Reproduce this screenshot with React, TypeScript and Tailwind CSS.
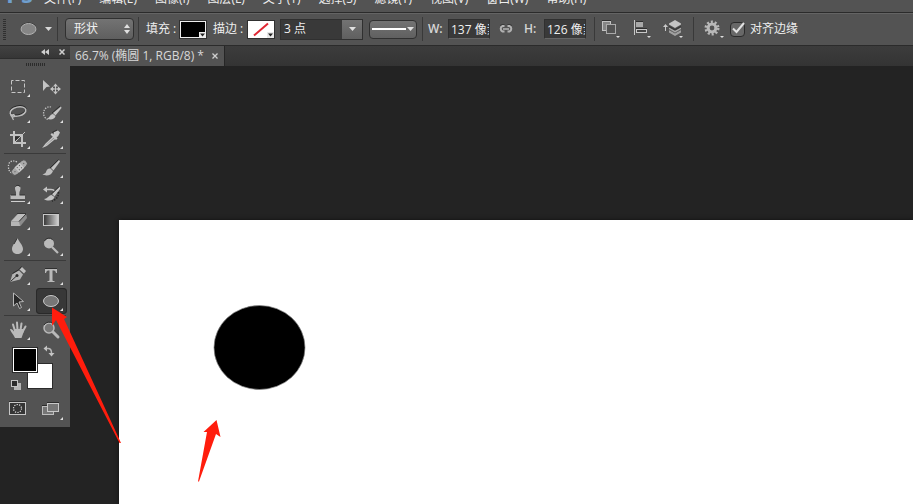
import React, { useState } from 'react';
import clsx from 'clsx';

const menus = ['文件(F)', '编辑(E)', '图像(I)', '图层(L)', '文字(Y)', '选择(S)', '滤镜(T)', '视图(V)', '窗口(W)', '帮助(H)'];

interface Tool {
  id: string;
  label: string;
  icon: React.ReactNode;
  noFlyout?: boolean;
}

const BrushShape = () => (
  <>
    <path d="M23 5 L15 13 L17.5 15.5 L24 6.5 Z" fill="#c4c4c4" />
    <path d="M14.5 13.5 C12 13 10.5 15 10 17 C9.5 18.5 8 19 6.5 19 C9 21.5 15.5 21 17 16 Z" fill="#bdbdbd" />
    <path d="M14 13 L22.5 4.5" stroke="#2e2e2e" />
  </>
);

// every icon is drawn in a 31x26 cell
const toolGroups: Tool[][] = [
  [
    {
      id: 'marquee',
      label: '矩形选框工具',
      icon: <rect x="8.5" y="6.5" width="13" height="12" fill="none" stroke="#c6c6c6" strokeDasharray="4 2" strokeDashoffset="2" />,
    },
    {
      id: 'move',
      label: '移动工具',
      noFlyout: true,
      icon: (
        <>
          <path d="M7 6 L14 12.5 L10.5 13 L7 17 Z" fill="#c4c4c4" />
          <path d="M19.5 10.5 V19.5 M15 15 H24" stroke="#c4c4c4" />
          <path d="M19.5 9.5 L22 12.5 H17 Z M19.5 20.5 L22 17.5 H17 Z M14 15 L17 12.5 V17.5 Z M25 15 L22 12.5 V17.5 Z" fill="#c4c4c4" />
          <path d="M18 13.5 h3 v3 h-3 Z" fill="#535353" />
          <path d="M19.5 12 V18 M16.5 15 H22.5" stroke="#c4c4c4" />
        </>
      ),
    },
    {
      id: 'lasso',
      label: '套索工具',
      icon: (
        <>
          <ellipse cx="15" cy="10.5" rx="8" ry="4.5" transform="rotate(-13 15 10.5)" fill="none" stroke="#292929" strokeWidth="1.5" />
          <ellipse cx="15" cy="11.5" rx="8" ry="4.5" transform="rotate(-13 15 11.5)" fill="none" stroke="#bebebe" strokeWidth="1.5" />
          <path d="M8 14 C7 17 12 18 11.5 15.5 C11 13.5 7.5 15 9 17 L10.5 20" fill="none" stroke="#bebebe" strokeWidth="1.2" />
        </>
      ),
    },
    {
      id: 'quick-select',
      label: '快速选择工具',
      icon: (
        <>
          <path d="M15 7 A5.5 6 0 1 0 12 19.5" fill="none" stroke="#c4c4c4" strokeWidth="1.3" strokeDasharray="1.3 1.2" />
          <path d="M25 6.5 L17 13 L19.5 15.5 L25.5 8 Z" fill="#c4c4c4" />
          <path d="M17 14 C14 14 14 18 11 18.5 C14 20.5 19 19.5 19.5 16 Z" fill="#c4c4c4" />
          <path d="M16 13 L24 6" stroke="#2e2e2e" />
        </>
      ),
    },
    {
      id: 'crop',
      label: '裁剪工具',
      icon: (
        <>
          <path d="M11 5 V17 H23 M7 9 H19 V21" fill="none" stroke="#c2c2c2" strokeWidth="2" />
          <path d="M12 16 L22 6" stroke="#c2c2c2" />
          <path d="M12 15 V10.5 H17 Z" fill="#2e2e2e" />
        </>
      ),
    },
    {
      id: 'eyedropper',
      label: '吸管工具',
      icon: (
        <>
          <path d="M18 10.5 L10 18 L8 20.5 L10.5 19.5 L19.5 12" fill="#858585" stroke="#c6c6c6" strokeWidth="1.2" />
          <path d="M18 6 L22 4.5 L24 6.5 L22 10.5 L20.5 11 L21.5 12.5 L20 14 L14.5 8.5 L16 7 L17.5 8.5 Z" fill="#c4c4c4" />
          <path d="M16 6.5 L21 4" stroke="#303030" />
        </>
      ),
    },
  ],
  [
    {
      id: 'healing',
      label: '污点修复画笔工具',
      icon: (
        <>
          <path d="M14 7 C8 4 5 8 5.5 12 C5.5 15 6.5 17 9 18" fill="none" stroke="#cdcdcd" strokeWidth="1.3" strokeDasharray="1.3 1.3" />
          <g transform="rotate(-43 16 13)">
            <rect x="7" y="9.5" width="19" height="7" rx="3.5" fill="#a9a9a9" stroke="#3a3a3a" strokeWidth="0.6" />
            <rect x="13" y="9.5" width="7" height="7" fill="#c8c8c8" />
            <path d="M14.5 11.5h1 M17.5 11.5h1 M14.5 14.5h1 M17.5 14.5h1 M10 13h1 M22 13h1" stroke="#555" />
          </g>
        </>
      ),
    },
    { id: 'brush', label: '画笔工具', icon: <BrushShape /> },
    {
      id: 'stamp',
      label: '仿制图章工具',
      icon: (
        <>
          <path d="M12 7 C12 4 17.5 4 17.5 7 C17.5 10 16 10 16.5 14 H22 V18 H7.5 V14 H13 C13.5 10 12 10 12 7 Z" fill="#bcbcbc" />
          <path d="M12.5 5.5 C13.5 4 16 4 17 5.5 M8 14 H13 M16.5 14 H22" stroke="#303030" fill="none" />
          <path d="M8 20.5 H22" stroke="#d0d0d0" />
        </>
      ),
    },
    {
      id: 'history-brush',
      label: '历史记录画笔工具',
      icon: (
        <>
          <path d="M24 5.5 L16 13 L18.5 15.5 L24 8 Z" fill="#c4c4c4" />
          <path d="M15.5 14 C13 14 12 17.5 8 18 C11 20.5 17.5 20 18.5 16 Z" fill="#c4c4c4" />
          <path d="M10 8.5 H15 C17 8.5 18 9 18.5 10" fill="none" stroke="#c4c4c4" strokeWidth="1.5" />
          <path d="M7 8.5 L11 5.5 V11.5 Z" fill="#c4c4c4" />
          <path d="M15.5 13 L23 5.5" stroke="#2e2e2e" />
          <path d="M22.5 11 C22.5 16 20.5 18.5 16 20" fill="none" stroke="#262626" strokeWidth="1.5" strokeDasharray="1.5 1.3" />
        </>
      ),
    },
    {
      id: 'eraser',
      label: '橡皮擦工具',
      icon: (
        <>
          <path d="M8 14 L15 6.5 H23 L24 11 L17.5 19 H8 Z" fill="#8c8c8c" />
          <path d="M8.5 14 L15 7 H23 L16 14 Z" fill="#bebebe" />
          <path d="M8 14.5 H16 L17 19 H8 Z" fill="#b5b5b5" />
          <path d="M14 6.5 H23 M16 14.5 L23 7" stroke="#383838" />
        </>
      ),
    },
    {
      id: 'gradient',
      label: '渐变工具',
      icon: (
        <>
          <defs>
            <linearGradient id="ramp">
              <stop offset="0" stopColor="#343434" />
              <stop offset="1" stopColor="#d4d4d4" />
            </linearGradient>
          </defs>
          <rect x="7.5" y="7.5" width="15" height="11" fill="url(#ramp)" stroke="#c8c8c8" />
          <path d="M7 6.5 H23" stroke="#303030" />
        </>
      ),
    },
    {
      id: 'blur',
      label: '模糊工具',
      icon: (
        <>
          <path d="M14.5 5 C13 9 9 12 9 16 C9 19 11.5 21 14.5 21 C17.5 21 20 19 20 16 C20 12 16 9 14.5 5 Z" fill="#bbbbbb" />
          <path d="M14 5.5 L11 11" stroke="#383838" />
        </>
      ),
    },
    {
      id: 'dodge',
      label: '减淡工具',
      icon: (
        <>
          <circle cx="13" cy="10.5" r="5" fill="#bababa" />
          <path d="M8.5 8 A5 5 0 0 1 16.5 6.5" fill="none" stroke="#303030" />
          <path d="M16 14 L22 20" stroke="#bababa" strokeWidth="2.2" />
        </>
      ),
    },
  ],
  [
    {
      id: 'pen',
      label: '钢笔工具',
      icon: (
        <>
          <path d="M7 20 L9.5 12 L16 8.5 L20 12.5 L17 17.5 Z" fill="#b4b4b4" />
          <path d="M16.5 7.5 L19 5 L23 9 L21 11.5 Z" fill="#c0c0c0" />
          <path d="M7.5 19.5 L13.5 14 M9.5 11.5 L16 7.5 L18.5 4.5" fill="none" stroke="#2d2d2d" />
          <circle cx="14" cy="13.5" r="1.5" fill="#2d2d2d" />
        </>
      ),
    },
    {
      id: 'type',
      label: '横排文字工具',
      icon: (
        <>
          <path d="M9 6.5 H21" stroke="#303030" />
          <path d="M9 7 H21 V11 H20 C19.5 9 19 8.5 16.5 8.5 V18 C16.5 19 17 19 18.5 19 V20 H11.5 V19 C13 19 13.5 19 13.5 18 V8.5 C11 8.5 10.5 9 10 11 H9 Z" fill="#b9b9b9" />
        </>
      ),
    },
    {
      id: 'path-select',
      label: '路径选择工具',
      icon: <path d="M10.5 5 V18 L14 15 L16.5 20.5 L18.5 19.5 L16 14 L20.5 13.5 Z" fill="#292929" stroke="#b8b8b8" />,
    },
    {
      id: 'ellipse',
      label: '椭圆工具',
      icon: (
        <>
          <ellipse cx="15" cy="12.5" rx="8" ry="6" fill="#222" />
          <ellipse cx="15" cy="13" rx="7.5" ry="5.5" fill="#777" stroke="#c8c8c8" />
        </>
      ),
    },
  ],
  [
    {
      id: 'hand',
      label: '抓手工具',
      icon: (
        <>
          <path d="M12 14 L10 7.5 M14.5 13 L14 5.5 M17.5 13 L18.5 6.5 M19.5 15 L22.5 9.5" stroke="#bababa" strokeWidth="2" strokeLinecap="round" />
          <path d="M7 12.5 C8 11.5 9.5 12.5 11 14.5 V12 H20 L21 14 L18.5 21 H12 C11 18 8.5 16 7 12.5 Z" fill="#bababa" />
        </>
      ),
    },
    {
      id: 'zoom',
      label: '缩放工具',
      noFlyout: true,
      icon: (
        <>
          <path d="M17 15 L22 20" stroke="#b9b9b9" strokeWidth="3" strokeLinecap="round" />
          <circle cx="13" cy="11" r="5" fill="#777" stroke="#b9b9b9" strokeWidth="1.5" />
          <path d="M8 8 A6 6 0 0 1 17 6.5" fill="none" stroke="#303030" />
        </>
      ),
    },
  ],
];

const Divider = () => <span className="h-6 w-px shrink-0 bg-[#393939]" />;

const Down = ({ className }: { className?: string }) => (
  <svg width="7" height="4" viewBox="0 0 7 4" className={clsx('shrink-0', className)}>
    <path d="M0 0 H7 L3.5 4 Z" fill="currentColor" />
  </svg>
);

interface SizeInputProps {
  id: string;
  label: string;
  value: string;
}

const SizeInput: React.FC<SizeInputProps> = ({ id, label, value }) => (
  <>
    <label htmlFor={id} className="w-5 shrink-0 font-semibold text-[#d6d6d6]">
      {label}:
    </label>
    <input
      id={id}
      defaultValue={value}
      className="h-5 w-[42px] shrink-0 border border-[#303030] border-b-[#666] bg-[#393939] pl-0.5 text-[#f0f0f0] outline-none"
    />
  </>
);

const OptionsBar = () => {
  const [align, setAlign] = useState(true);

  return (
    <div className="flex h-[34px] shrink-0 items-center overflow-hidden border-y border-[#2b2b2b] bg-[#535353] pl-[3px] shadow-[inset_0_1px_0_#646464]">
      <svg width="3" height="21" className="shrink-0">
        <path d="M1.5 0 V21" stroke="#303030" strokeWidth="3" strokeDasharray="1 1" />
      </svg>
      <button aria-label="椭圆工具" className="mr-[5px] ml-3.5 flex w-8 shrink-0 items-center justify-between text-[#d8d8d8]">
        <svg width="17" height="14" viewBox="0 0 17 14">
          <ellipse cx="8.5" cy="6.5" rx="8" ry="6" fill="#292929" />
          <ellipse cx="8.5" cy="7" rx="7.5" ry="5.5" fill="#858585" stroke="#b4b4b4" />
        </svg>
        <Down />
      </button>
      <Divider />
      <div className="relative ml-[7px] mr-1 shrink-0">
        <select
          aria-label="工具模式"
          className="block h-[22px] w-[69px] appearance-none rounded-sm border border-[#303030] bg-linear-to-b from-[#737373] to-[#5f5f5f] pl-2 text-[#f0f0f0]"
        >
          <option>形状</option>
          <option>路径</option>
          <option>像素</option>
        </select>
        <svg width="6" height="10" viewBox="0 0 6 10" className="pointer-events-none absolute right-1 top-1.5">
          <path d="M0 4 L3 0 L6 4 Z M0 6 H6 L3 10 Z" fill="#e0e0e0" />
        </svg>
      </div>
      <Divider />
      <span className="ml-[7px] w-[33px] shrink-0 whitespace-nowrap">填充 :</span>
      <button aria-label="填充" className="h-[19px] w-7 shrink-0 border border-[#303030] bg-black">
        <svg width="26" height="17" viewBox="0 0 26 17">
          <rect x="0.5" y="0.5" width="25" height="16" fill="#000" stroke="#eee" />
          <path d="M19 11 H26 V17 H19 Z" fill="#eee" />
          <path d="M20 12.5 H25 L22.5 15.5 Z" fill="#222" />
        </svg>
      </button>
      <span className="ml-1.5 w-[34px] shrink-0 whitespace-nowrap">描边 :</span>
      <button aria-label="描边" className="h-[19px] w-7 shrink-0 border border-[#303030] bg-white">
        <svg width="26" height="17" viewBox="0 0 26 17">
          <path d="M6 14.5 L20 2.5" stroke="#e02632" strokeWidth="2" />
          <path d="M19 11 H26 V17 H19 Z" fill="#e8e8e8" />
          <path d="M20 12.5 H25 L22.5 15.5 Z" fill="#222" />
        </svg>
      </button>
      <div className="ml-[5px] flex h-[21px] w-[83px] shrink-0 border border-[#303030] bg-[#393939]">
        <input aria-label="描边宽度" defaultValue="3 点" className="w-0 flex-1 pl-[3px] text-[#f0f0f0] outline-none" />
        <button aria-label="描边宽度选项" className="flex w-5 items-center justify-center bg-linear-to-b from-[#737373] to-[#606060] text-[#e0e0e0]">
          <Down />
        </button>
      </div>
      <button
        aria-label="描边类型"
        className="ml-1.5 mr-[5px] flex h-[19px] w-12 shrink-0 items-center justify-between rounded-sm border border-[#303030] bg-linear-to-b from-[#737373] to-[#606060] px-[2px] text-[#e0e0e0]"
      >
        <span className="h-0.5 w-[34px] bg-white" />
        <Down />
      </button>
      <Divider />
      <span className="w-[5px] shrink-0" />
      <SizeInput id="shape-w" label="W" value="137 像素" />
      <button aria-label="链接宽高" className="ml-2 mr-2.5 shrink-0">
        <svg width="16" height="10" viewBox="0 0 16 10" fill="none">
          <path d="M6.5 7.5 H4.5 A3 3 0 0 1 4.5 2 H6.5 M9.5 7.5 H11.5 A3 3 0 0 0 11.5 2 H9.5" stroke="#b2b2b2" strokeWidth="2" />
          <path d="M5 5 H11" stroke="#c5c5c5" strokeWidth="1.3" />
          <path d="M2 1.5 L4 0.5 H6.5 M9.5 0.5 H12 L14 1.5" stroke="#333" strokeWidth="0.8" />
        </svg>
      </button>
      <SizeInput id="shape-h" label="H" value="126 像素" />
      <span className="w-2 shrink-0" />
      <Divider />
      <button aria-label="路径操作" className="ml-[7px] shrink-0">
        <svg width="18" height="20" viewBox="0 0 18 20">
          <rect x="0.5" y="2.5" width="8" height="9" fill="#858585" stroke="#c2c2c2" />
          <path d="M0 1.5 H9" stroke="#303030" />
          <rect x="4.5" y="5.5" width="9" height="9" fill="#535353" stroke="#aaa" />
          <path d="M14 17 H18 L16 19 Z" fill="#ddd" />
        </svg>
      </button>
      <button aria-label="路径对齐方式" className="ml-[13px] shrink-0">
        <svg width="18" height="20" viewBox="0 0 18 20">
          <path d="M1.5 1 V16" stroke="#c8c8c8" />
          <rect x="3" y="3" width="7" height="5" fill="#a9a9a9" />
          <path d="M3 2.5 H10 M3 9.5 H14" stroke="#303030" />
          <rect x="3.5" y="10.5" width="10" height="3" fill="#444" stroke="#c8c8c8" />
          <path d="M14 17 H18 L16 19 Z" fill="#ddd" />
        </svg>
      </button>
      <button aria-label="路径排列方式" className="ml-3 mr-2.5 shrink-0">
        <svg width="20" height="20" viewBox="0 0 20 20">
          <path d="M2.5 12 V6" stroke="#c8c8c8" />
          <path d="M0 8 L2.5 5 L5 8 Z" fill="#c8c8c8" />
          <path d="M6 11 L12 14 L18 11 V13.5 L12 17 L6 13.5 Z" fill="#a0a0a0" />
          <path d="M6 10.5 L12 14 L18 10.5" fill="none" stroke="#666" />
          <path d="M6 8 L12 11 L18 8 V10 L12 13.5 L6 10 Z" fill="#a8a8a8" />
          <path d="M6 7.5 L12 11 L18 7.5" fill="none" stroke="#3a3a3a" strokeWidth="1.5" />
          <path d="M12 1 L18 4.5 V5.5 L12 9 L6 5.5 V4.5 Z" fill="#c4c4c4" />
          <path d="M16 17 H20 L18 19 Z" fill="#ddd" />
        </svg>
      </button>
      <Divider />
      <button aria-label="几何选项" className="mr-1.5 ml-2.5 shrink-0">
        <svg width="20" height="20" viewBox="0 0 20 20">
          <circle cx="8" cy="9" r="6" fill="none" stroke="#b8b8b8" strokeWidth="3" strokeDasharray="2 1.77" />
          <circle cx="8" cy="9" r="3.9" fill="none" stroke="#b8b8b8" strokeWidth="3" />
          <path d="M16 17 H20 L18 19 Z" fill="#ddd" />
        </svg>
      </button>
      <label className="flex shrink-0 items-center gap-[5px] whitespace-nowrap">
        <span className="relative size-[15px]">
          <input
            type="checkbox"
            checked={align}
            onChange={(e) => setAlign(e.target.checked)}
            className="block size-[15px] appearance-none rounded-sm border border-[#2b2b2b] bg-[#686868]"
          />
          {align && (
            <svg width="16" height="14" viewBox="0 0 16 14" className="pointer-events-none absolute left-0 top-0">
              <path d="M3 6.5 L6.5 10 L14 1" fill="none" stroke="#e2e2e2" strokeWidth="2" />
            </svg>
          )}
        </span>
        对齐边缘
      </label>
    </div>
  );
};

interface ToolboxProps {
  active: string;
  onSelect: (id: string) => void;
}

const Toolbox: React.FC<ToolboxProps> = ({ active, onSelect }) => (
  <aside className="shrink-0 self-start bg-[#535353]">
    <div className="flex h-3 items-center justify-end gap-2.5 bg-linear-to-b from-[#424242] to-[#363636] pr-[5px]">
      <button aria-label="折叠">
        <svg width="8" height="6" viewBox="0 0 8 6" className="block">
          <path d="M4 0 V6 L0 3 Z M8 0 V6 L4 3 Z" fill="#cfcfcf" />
        </svg>
      </button>
      <button aria-label="关闭">
        <svg width="6" height="6" viewBox="0 0 6 6" className="block">
          <path d="M0.5 0.5 L5.5 5.5 M5.5 0.5 L0.5 5.5" stroke="#cfcfcf" strokeWidth="1.5" />
        </svg>
      </button>
    </div>
    <div className="flex h-4 justify-center border-t border-[#2d2d2d] pt-1">
      <svg width="19" height="3">
        <path d="M0 1.5 H19" stroke="#2c2c2c" strokeWidth="3" strokeDasharray="1 1" />
      </svg>
    </div>
    {toolGroups.map((group, i) => (
      <div key={i}>
        {i > 0 && <hr className="mx-1 my-px border-[#3a3a3a]" />}
        <div className="grid grid-cols-2 gap-x-0.5 px-[3px]">
          {group.map((tool) => (
            <button
              key={tool.id}
              aria-label={tool.label}
              aria-pressed={active === tool.id}
              onClick={() => onSelect(tool.id)}
              className={clsx('h-[26px] rounded-sm', active === tool.id && 'bg-[#383838] inset-ring inset-ring-[#292929]')}
            >
              <svg width="31" height="26" viewBox="0 0 31 26" fill="none" className="block">
                {tool.icon}
                {!tool.noFlyout && <path d="M27 20 V23 H24 Z" fill="#e0e0e0" />}
              </svg>
            </button>
          ))}
        </div>
      </div>
    ))}
    <div className="relative mt-0.5 h-[50px]">
      <button aria-label="背景色" className="absolute left-[27px] top-[18px] size-[26px] border border-[#2b2b2b] bg-white" />
      <button aria-label="前景色" className="absolute left-3 top-0.5 size-[26px] border border-[#2b2b2b] bg-black inset-ring inset-ring-white" />
      <button aria-label="切换颜色" className="absolute left-[43px] top-0">
        <svg width="12" height="12" viewBox="0 0 12 12" className="block">
          <path d="M3 3.5 H5 C7.5 3.5 8.5 5 8.5 8" fill="none" stroke="#b8b8b8" strokeWidth="1.5" />
          <path d="M0.5 3.5 L4 0.5 V6.5 Z M5.5 8 H11.5 L8.5 11.5 Z" fill="#c4c4c4" />
        </svg>
      </button>
      <button aria-label="默认颜色" className="absolute left-2.5 top-[34px]">
        <svg width="12" height="12" viewBox="0 0 12 12" className="block">
          <rect x="4" y="4" width="7" height="7" fill="#b4b4b4" />
          <rect x="1.5" y="1.5" width="6" height="6" fill="#2a2a2a" stroke="#c2c2c2" />
        </svg>
      </button>
    </div>
    <div className="grid h-8 grid-cols-2 gap-x-0.5 px-[3px]">
      <button aria-label="快速蒙版" className="self-start">
        <svg width="31" height="26" viewBox="0 0 31 26" fill="none" className="block">
          <rect x="6.5" y="7.5" width="16" height="12" fill="#353535" stroke="#c6c6c6" />
          <path d="M6 6.5 H23" stroke="#303030" />
          <circle cx="14.5" cy="13.5" r="4" stroke="#e0e0e0" strokeWidth="1.2" strokeDasharray="1.2 1.3" />
        </svg>
      </button>
      <button aria-label="屏幕模式" className="self-start">
        <svg width="31" height="26" viewBox="0 0 31 26" fill="none" className="block">
          <rect x="6.5" y="11.5" width="11" height="8" fill="#767676" stroke="#bdbdbd" />
          <rect x="11.5" y="8.5" width="11" height="8" fill="#767676" stroke="#c8c8c8" />
          <path d="M11 7.5 H23 M6 10.5 H11" stroke="#2c2c2c" />
          <path d="M27 22 V25 H24 Z" fill="#e0e0e0" />
        </svg>
      </button>
    </div>
  </aside>
);

export default function App() {
  const [active, setActive] = useState('ellipse');

  return (
    <div className="relative flex h-screen flex-col overflow-hidden bg-[#232323] font-['Open_Sans','Noto_Sans_CJK_SC',sans-serif] text-xs text-[#eeeeee]">
      <header className="flex h-3 shrink-0 items-end overflow-hidden bg-[#535353] pb-1 pl-1.5">
        <span className="w-[38px] shrink-0 text-2xl leading-7 font-bold text-[#6f9fce]">Ps</span>
        <nav className="flex gap-[18px] whitespace-nowrap">
          {menus.map((menu) => (
            <button key={menu} className="block h-[18px]">
              {menu}
            </button>
          ))}
        </nav>
      </header>
      <OptionsBar />
      <main className="flex min-h-0 flex-1">
        <Toolbox active={active} onSelect={setActive} />
        <section className="flex min-w-0 flex-1 flex-col">
          <div className="flex h-5 shrink-0 bg-linear-to-b from-[#3c3c3c] to-[#343434]">
            <div className="flex items-center gap-2 border-r border-[#262626] bg-[#535353] pr-1.5 pl-[5px] whitespace-nowrap text-[#d8d8d8]">
              66.7% (椭圆 1, RGB/8) *
              <button aria-label="关闭文档">
                <svg width="6" height="6" viewBox="0 0 6 6" className="block">
                  <path d="M0.5 0.5 L5.5 5.5 M5.5 0.5 L0.5 5.5" stroke="#d0d0d0" strokeWidth="1.3" />
                </svg>
              </button>
            </div>
          </div>
          <div className="flex min-h-0 flex-1 pt-[154px] pl-[49px]">
            <div className="min-w-0 flex-1 overflow-hidden bg-white shadow-[0_0_4px_#111]">
              <svg width="240" height="200" viewBox="0 0 240 200" className="block">
                <ellipse cx="140.5" cy="127.5" rx="45.5" ry="42" fill="#000" stroke="#888" strokeWidth="0.7" />
              </svg>
            </div>
          </div>
        </section>
      </main>
      <svg width="240" height="500" viewBox="0 0 240 500" className="pointer-events-none absolute left-0 top-0">
        <path d="M52 307.5 L67 317 L64 319 L121 443 L119.5 443 L56 320 L52 326 Z" fill="#ff1d0d" />
        <path d="M216.5 420 L220.5 437 L216 434 L199 481.5 L198 481.5 L207 432 L203.5 432 Z" fill="#ff1d0d" />
      </svg>
    </div>
  );
}
